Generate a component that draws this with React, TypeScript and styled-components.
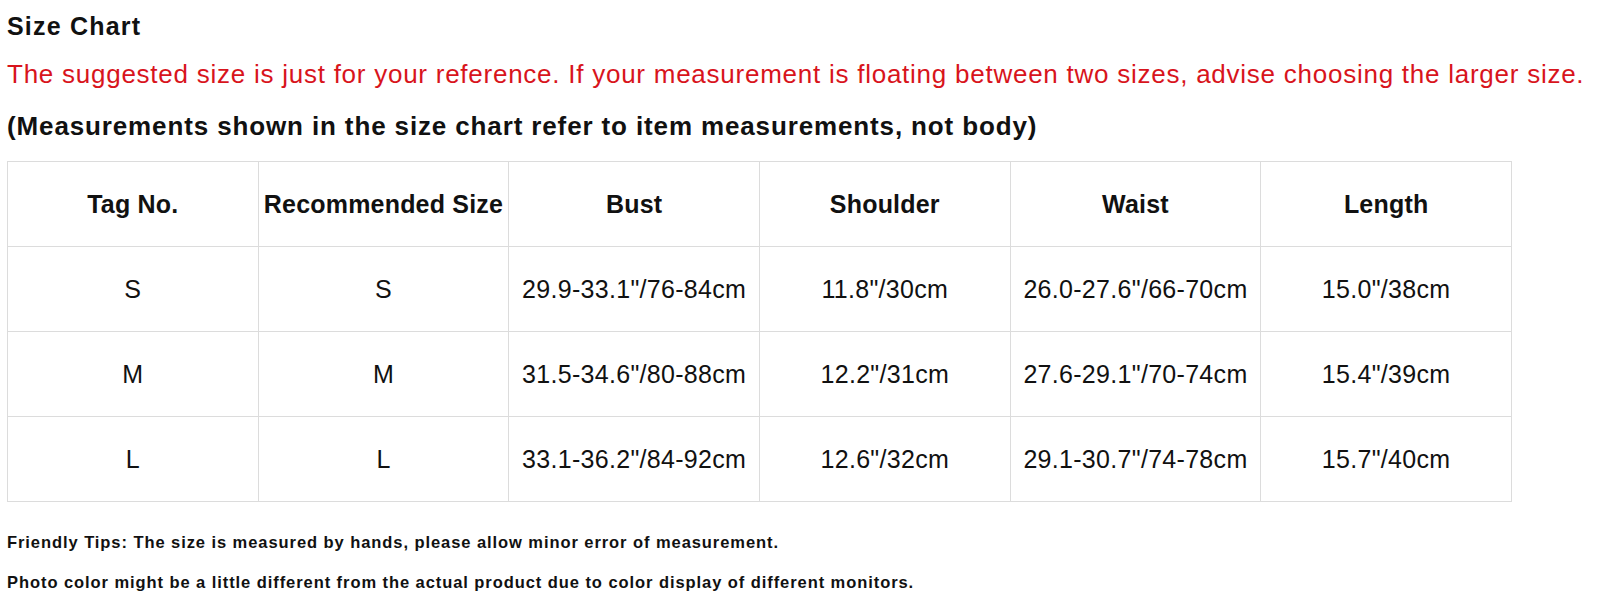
import React from 'react';
import styled, { createGlobalStyle } from 'styled-components';

const Colors = {
    text: '#111111',
    red: '#d8141c',
    border: '#dcdcdc',
};

const GlobalStyle = createGlobalStyle`
    body {
        margin: 0;
        background: #ffffff;
        font-family: 'Liberation Sans', Arial, sans-serif;
        color: ${Colors.text};
    }
`;

const rows = [
    ['S', 'S', '29.9-33.1"/76-84cm', '11.8"/30cm', '26.0-27.6"/66-70cm', '15.0"/38cm'],
    ['M', 'M', '31.5-34.6"/80-88cm', '12.2"/31cm', '27.6-29.1"/70-74cm', '15.4"/39cm'],
    ['L', 'L', '33.1-36.2"/84-92cm', '12.6"/32cm', '29.1-30.7"/74-78cm', '15.7"/40cm'],
];

const headers = ['Tag No.', 'Recommended Size', 'Bust', 'Shoulder', 'Waist', 'Length'];

function App() {
    return (
        <Page>
            <GlobalStyle />
            <Title>Size Chart</Title>
            <Notice>
                The suggested size is just for your reference. If your measurement is floating between two sizes,
                advise choosing the larger size.
            </Notice>
            <SubTitle>(Measurements shown in the size chart refer to item measurements, not body)</SubTitle>
            <Chart>
                <thead>
                    <tr>
                        {headers.map((h) => (
                            <HeadCell key={h}>{h}</HeadCell>
                        ))}
                    </tr>
                </thead>
                <tbody>
                    {rows.map((r) => (
                        <tr key={r[0]}>
                            {r.map((c, i) => (
                                <Cell key={i}>{c}</Cell>
                            ))}
                        </tr>
                    ))}
                </tbody>
            </Chart>
            <Tips>
                <Tip>Friendly Tips: The size is measured by hands, please allow minor error of measurement.</Tip>
                <Tip>Photo color might be a little different from the actual product due to color display of different monitors.</Tip>
            </Tips>
        </Page>
    );
}

const Page = styled.div`
    display: flex;
    flex-direction: column;
    align-items: flex-start;
    padding: 11px 0 0 7px;
`;

const Title = styled.h2`
    margin: 0;
    font-size: 25px;
    line-height: 30px;
    letter-spacing: 1.2px;
    font-weight: 700;
`;

const Notice = styled.p`
    margin: 18px 0 0;
    font-size: 26px;
    line-height: 30px;
    letter-spacing: 0.75px;
    color: ${Colors.red};
    white-space: nowrap;
`;

const SubTitle = styled.h3`
    margin: 22px 0 0;
    font-size: 26px;
    line-height: 30px;
    letter-spacing: 0.87px;
    font-weight: 700;
    white-space: nowrap;
`;

const Chart = styled.table`
    margin-top: 20px;
    border-collapse: collapse;
    table-layout: fixed;
    width: 1505px;
    border: 1px solid ${Colors.border};
`;

const HeadCell = styled.th`
    height: 84px;
    padding: 0;
    border: 1px solid ${Colors.border};
    font-size: 25px;
    letter-spacing: 0.2px;
    font-weight: 700;
    text-align: center;
    vertical-align: middle;
    white-space: nowrap;
`;

const Cell = styled.td`
    height: 84px;
    padding: 0;
    border: 1px solid ${Colors.border};
    font-size: 25px;
    letter-spacing: 0.3px;
    text-align: center;
    vertical-align: middle;
    white-space: nowrap;
`;

const Tips = styled.div`
    display: flex;
    flex-direction: column;
    gap: 20px;
    margin-top: 30px;
`;

const Tip = styled.p`
    margin: 0;
    font-size: 16.5px;
    line-height: 20px;
    letter-spacing: 0.93px;
    font-weight: 700;
    white-space: nowrap;
`;

export default App;
